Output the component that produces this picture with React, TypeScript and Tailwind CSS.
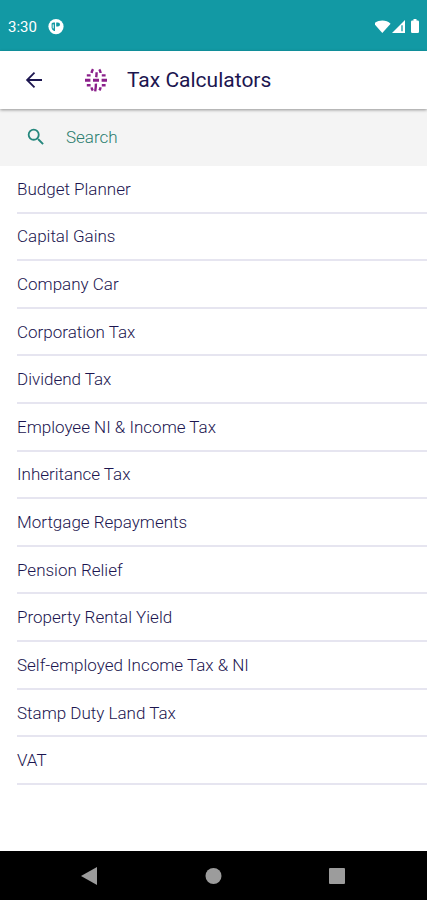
const calculators = [
  'Budget Planner',
  'Capital Gains',
  'Company Car',
  'Corporation Tax',
  'Dividend Tax',
  'Employee NI & Income Tax',
  'Inheritance Tax',
  'Mortgage Repayments',
  'Pension Relief',
  'Property Rental Yield',
  'Self-employed Income Tax & NI',
  'Stamp Duty Land Tax',
  'VAT',
];

const StatusBar = () => (
  <div className="flex h-[51px] items-center justify-between bg-[#1299a4] pt-0.5 pr-1 pl-2 text-white">
    <div className="flex items-center gap-[11px]">
      <span className="text-[15px] leading-6">3:30</span>
      <svg className="h-4 w-4" viewBox="0 0 16 16" aria-hidden="true">
        <circle cx="8" cy="7.6" r="7.6" fill="white" />
        <path d="M3.6 4.4Q4.4 3.4 5.8 3.4H7v8.6H6Q4 11 3.6 9z" fill="#1299a4" />
        <path d="M8.2 3.4h1.6q2.2 0 2.2 2.1t-2.2 2.1H8.2z" fill="#1299a4" />
        <path d="M5.2 5.4v4" stroke="white" strokeWidth="1" />
      </svg>
    </div>
    <svg className="h-4 w-12" viewBox="0 0 48 16" aria-hidden="true">
      <path d="M-1 4.7C3.6.4 11.2.4 15.6 4.7L7.3 13.9z" fill="white" />
      <path d="M30 1v13H17z" fill="white" />
      <path d="M26 6.2h2v6h-2z" fill="#1299a4" opacity=".65" />
      <path d="M38.5 0h3v1.5h1.2q1.3 0 1.3 1.3v9.9q0 1.3-1.3 1.3h-5.4q-1.3 0-1.3-1.3V2.8q0-1.3 1.3-1.3h1.2z" fill="white" />
    </svg>
  </div>
);

const Logo = () => (
  <svg className="h-6 w-6" viewBox="0 0 24 24" fill="none" stroke="#8b208b" strokeWidth="2.4" aria-hidden="true">
    <path d="M9 1.2Q7.9 3 7.6 5M15.3 1.4Q16.4 3 16.6 5M12.6 4.2Q12.6 6.8 12.2 9.2" />
    <path d="M2.8 7.4h3.8M17.8 7.4h3.8" />
    <path d="M1 12.3h5.4M9 12.3h6M17.6 12.3H23" strokeWidth="3" />
    <path d="M2.8 17.2h3.8M17.8 17.2h3.8" />
    <path d="M11.9 15.6Q12 19 11.2 23.4M7.6 19.4Q7.7 21 8.8 22.6M16.6 19.2Q16.3 21 15.4 22.4" />
  </svg>
);

const Header = () => (
  <header className="relative flex h-[58px] items-center bg-white pl-[22px] text-[#1c1650] shadow-[0_1px_3px_rgba(0,0,0,0.4)]">
    <button type="button" aria-label="Back">
      <svg className="h-6 w-6" viewBox="0 0 24 24" fill="none" stroke="currentColor" strokeWidth="1.8" aria-hidden="true">
        <path d="M20 12H5M12.5 4.6L5.1 12l7.4 7.4" />
      </svg>
    </button>
    <div className="ml-[38px] flex items-center gap-[19px]">
      <Logo />
      <h1 className="text-[21px] leading-6 font-normal">Tax Calculators</h1>
    </div>
  </header>
);

const SearchBar = () => (
  <label className="flex h-[57px] items-center gap-[19px] bg-[#f4f4f4] pr-4 pb-0.5 pl-[25px] text-[#25877d]">
    <svg className="h-[22px] w-[22px]" viewBox="0 0 24 24" fill="currentColor" aria-hidden="true">
      <path d="M15.5 14h-.79l-.28-.27A6.47 6.47 0 0 0 16 9.5 6.5 6.5 0 1 0 9.5 16c1.61 0 3.09-.59 4.23-1.57l.27.28v.79l5 4.99L20.49 19zm-6 0a4.5 4.5 0 1 1 0-9 4.5 4.5 0 0 1 0 9z" />
    </svg>
    <input
      type="text"
      aria-label="Search"
      placeholder="Search"
      className="min-w-0 flex-1 bg-transparent text-[17px] leading-6 font-light outline-none placeholder:text-[#2b7d6e]"
    />
  </label>
);

const NavigationBar = () => (
  <nav className="flex h-[49px] items-center justify-around bg-black px-7 text-[#9c9c9c]">
    <button type="button" aria-label="Back">
      <svg className="h-5 w-5" viewBox="0 0 20 20" fill="currentColor" aria-hidden="true">
        <path d="M17 1v18L1 10z" />
      </svg>
    </button>
    <button type="button" aria-label="Home">
      <svg className="h-5 w-5" viewBox="0 0 20 20" fill="currentColor" aria-hidden="true">
        <circle cx="10.5" cy="10" r="8" />
      </svg>
    </button>
    <button type="button" aria-label="Recent apps">
      <svg className="h-5 w-5" viewBox="0 0 20 20" fill="currentColor" aria-hidden="true">
        <rect x="2" y="2" width="16" height="16" rx="1" />
      </svg>
    </button>
  </nav>
);

const App = () => {
  return (
    <div className="flex min-h-screen flex-col bg-white font-[Roboto,sans-serif]">
      <StatusBar />
      <Header />
      <SearchBar />
      <main className="flex flex-1 flex-col pb-[66px] pl-[17px]">
        <ul className="flex flex-1 flex-col">
          {calculators.map((name) => (
            <li key={name} className="flex flex-1 border-b-2 border-[#e6e5f0]">
              <a href="#" className="flex flex-1 items-center py-1 text-[17px] leading-6 font-light text-[#1c1650]">
                {name}
              </a>
            </li>
          ))}
        </ul>
      </main>
      <NavigationBar />
    </div>
  );
};

export default App;
